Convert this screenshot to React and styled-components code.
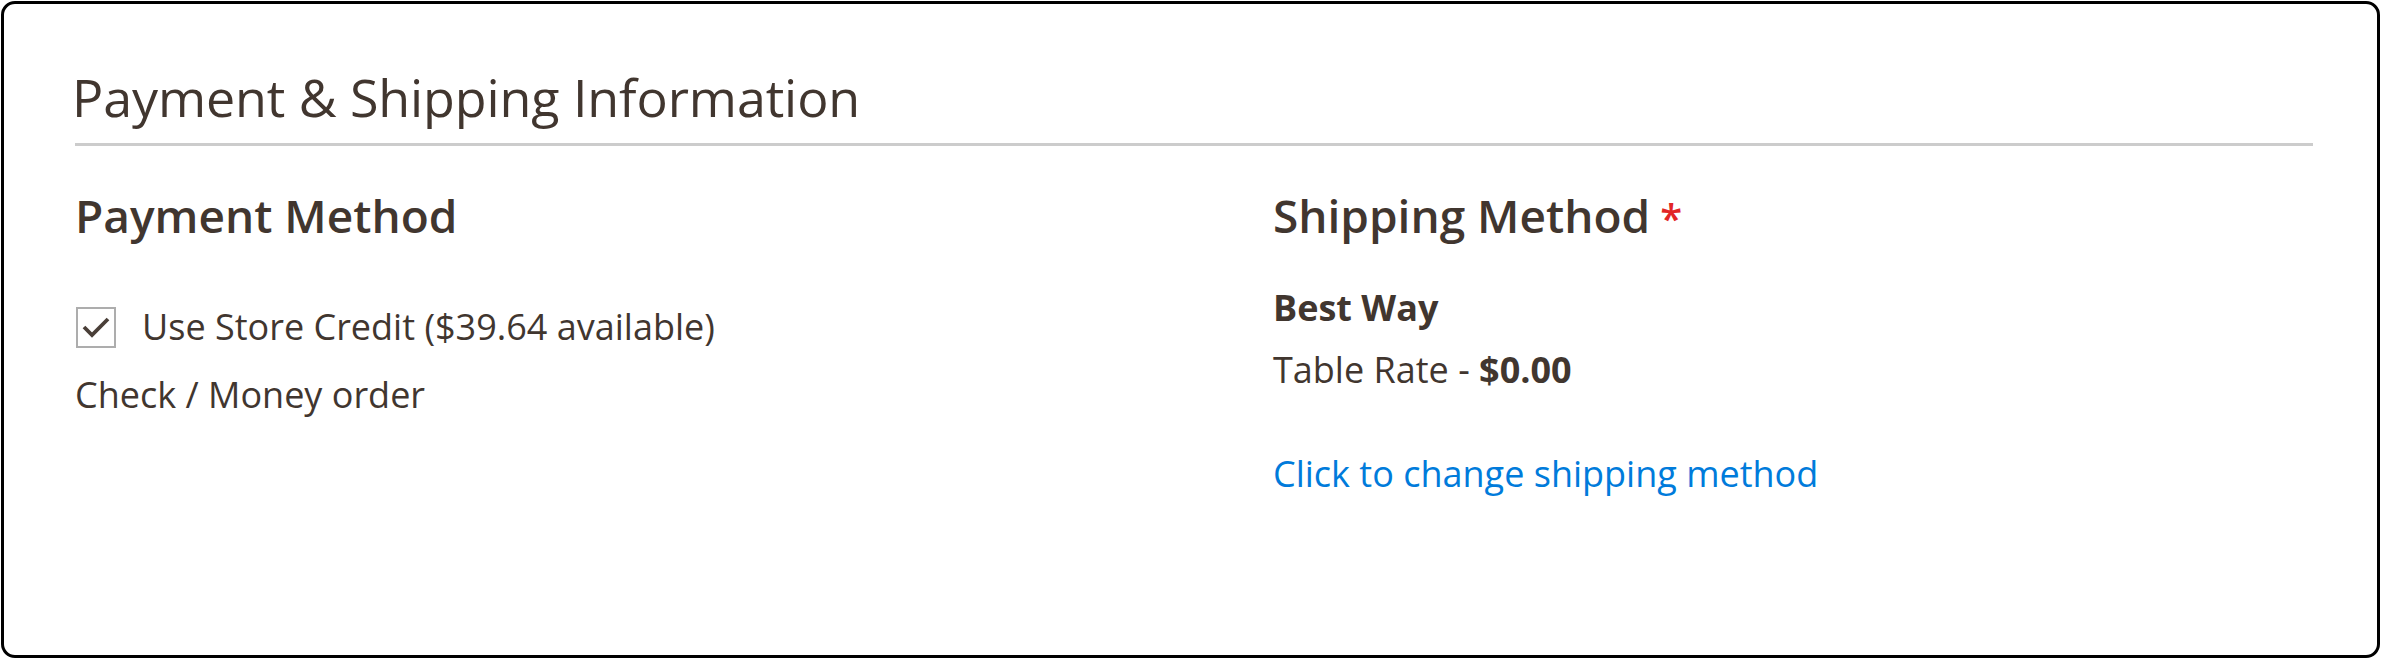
import React from "react";
import styled, { createGlobalStyle } from "styled-components";

const GlobalStyle = createGlobalStyle`
  html, body { margin: 0; padding: 0; background: #ffffff; }
  body { font-family: "Open Sans", "Liberation Sans", sans-serif; color: #41362f; }
  #root { padding: 1px; }
`;

const Card = styled.section`
  box-sizing: border-box;
  width: 2379px;
  height: 657px;
  border: 3px solid #000;
  border-radius: 14px;
  background: #fff;
  padding: 62px 64px 0 71px;
`;

const SectionTitle = styled.h1`
  margin: 0;
  font-size: 52px;
  font-weight: 400;
  line-height: 62px;
  letter-spacing: -0.1px;
  text-indent: -3px;
  color: #41362f;
  padding-bottom: 15px;
  border-bottom: 3px solid #cccccc;
`;

const Columns = styled.div`
  display: grid;
  grid-template-columns: 1198px 1fr;
  margin-top: 42px;
`;

const Column = styled.div`
  display: flex;
  flex-direction: column;
`;

const ColumnTitle = styled.h2`
  margin: 0;
  font-size: 46px;
  font-weight: 600;
  line-height: 55px;
  color: #41362f;
`;

const Required = styled.span`
  color: #e22626;
  font-size: 40px;
  font-weight: 600;
  margin-left: 10px;
`;

const CheckRow = styled.label`
  display: flex;
  align-items: center;
  gap: 26px;
  margin-top: ${(p) => p.$top}px;
  font-size: 36px;
  line-height: 50px;
`;

const CheckBox = styled.span`
  box-sizing: border-box;
  width: 40px;
  height: 41px;
  border: 2px solid #adadad;
  background: #fff;
  display: flex;
  align-items: center;
  justify-content: center;
  margin-left: 1px;
`;

const Text = styled.div`
  margin-top: ${(p) => p.$top}px;
  font-size: 36px;
  line-height: 50px;
  font-weight: ${(p) => (p.$bold ? 700 : 400)};
  color: #41362f;
`;

const Strong = styled.strong`
  font-weight: 700;
`;

const Link = styled.a`
  display: block;
  margin-top: ${(p) => p.$top}px;
  font-size: 36px;
  line-height: 50px;
  color: #007bdb;
  text-decoration: none;
`;

export default function App() {
  return (
    <>
      <GlobalStyle />
      <Card>
        <SectionTitle>Payment &amp; Shipping Information</SectionTitle>
        <Columns>
          <Column>
            <ColumnTitle>Payment Method</ColumnTitle>
            <CheckRow $top={59}>
              <CheckBox>
                <svg width="30" height="24" viewBox="0 0 30 24">
                  <path d="M3 12 L11 20 L27 4" fill="none" stroke="#4a3f38" strokeWidth="3.8" />
                </svg>
              </CheckBox>
              <span>Use Store Credit ($39.64 available)</span>
            </CheckRow>
            <Text $top={18}>Check / Money order</Text>
          </Column>
          <Column>
            <ColumnTitle>
              Shipping Method<Required>*</Required>
            </ColumnTitle>
            <Text $top={38} $bold>Best Way</Text>
            <Text $top={12}>
              Table Rate - <Strong>$0.00</Strong>
            </Text>
            <Link href="#" $top={54}>Click to change shipping method</Link>
          </Column>
        </Columns>
      </Card>
    </>
  );
}
